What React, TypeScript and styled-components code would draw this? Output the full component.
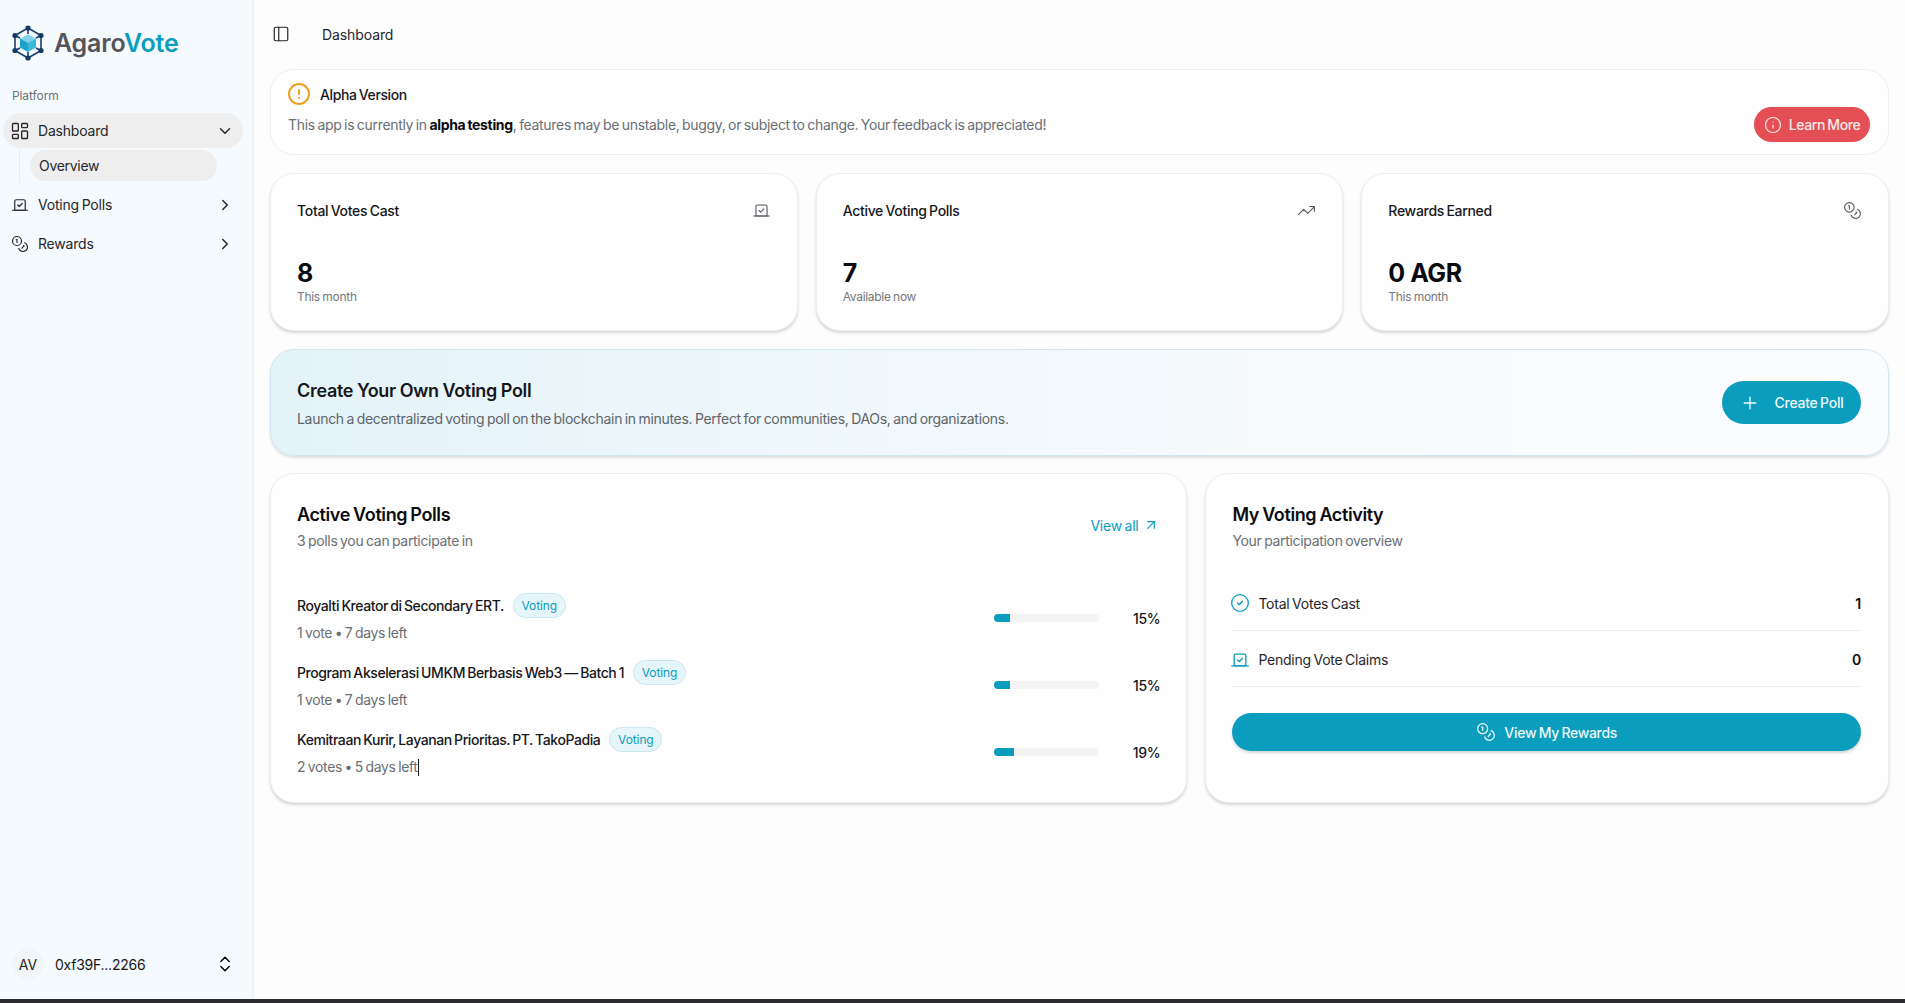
import React from "react";
import styled, { createGlobalStyle } from "styled-components";
import {
  ArrowUpRight,
  ChevronDown,
  ChevronRight,
  ChevronsUpDown,
  CircleAlert,
  CircleCheck,
  Coins,
  Info,
  LayoutDashboard,
  PanelLeft,
  Plus,
  TrendingUp,
  Vote,
} from "lucide-react";

const TEAL = "#0a9dbe";
const FONT = `Inter, "Liberation Sans", sans-serif`;

const GlobalStyle = createGlobalStyle`
  html, body {
    margin: 0;
    padding: 0;
    height: 100%;
    overflow: hidden;
    background: #fdfdfe;
  }
  * {
    box-sizing: border-box;
  }
  body {
    font-family: ${FONT};
    color: #0b0b0f;
  }
`;

const Page = styled.div`
  display: flex;
  flex-direction: column;
  height: 1003px;
`;

const Shell = styled.div`
  flex: 1;
  display: flex;
  min-height: 0;
`;

const BottomStrip = styled.div`
  height: 4px;
  background: #2b2b2d;
`;

const Sidebar = styled.aside`
  width: 254px;
  flex-shrink: 0;
  display: flex;
  flex-direction: column;
  background: #f5fafe;
  border-right: 2px solid #f0f1f3;
  padding: 22px 0 0;
`;

const Brand = styled.div`
  display: flex;
  align-items: center;
  gap: 10px;
  padding: 0 0 0 12px;
  height: 42px;
`;

const BrandName = styled.span`
  font-size: 25px;
  font-weight: 600;
  letter-spacing: -0.2px;
  color: #54545a;
`;

const BrandAccent = styled.span`
  color: ${TEAL};
`;

const GroupLabel = styled.div`
  font-size: 12px;
  line-height: 16px;
  letter-spacing: -0.1px;
  color: #6f7276;
  padding-left: 12px;
  margin-top: 24px;
  margin-bottom: 9px;
`;

const NavList = styled.nav`
  display: flex;
  flex-direction: column;
  padding: 0 9px 0 3px;
`;

const NavItem = styled.div<{ $active?: boolean; $gap?: number }>`
  display: flex;
  align-items: center;
  height: 35px;
  margin-top: ${(p) => p.$gap ?? 0}px;
  padding: 0 9px 0 8px;
  gap: 9px;
  border-radius: 18px;
  font-size: 14px;
  letter-spacing: -0.2px;
  word-spacing: -1px;
  color: #26262b;
  background: ${(p) => (p.$active ? "#eeeeee" : "transparent")};
`;

const NavText = styled.span`
  flex: 1;
`;

const DashboardIcon = styled(LayoutDashboard)`
  margin: 0 -1px;
`;

const SubList = styled.div`
  margin: 1px 0 0 16px;
  padding: 1px 0 1px 10px;
  border-left: 1px solid #e8ebee;
  height: 34px;
`;

const SubItem = styled.div`
  display: flex;
  align-items: center;
  width: 187px;
  height: 31px;
  padding-left: 9px;
  border-radius: 16px;
  background: #eeeeee;
  font-size: 14px;
  letter-spacing: -0.3px;
  color: #26262b;
`;

const SidebarFooter = styled.div`
  margin-top: auto;
  display: flex;
  align-items: center;
  height: 32px;
  margin-bottom: 19px;
  padding: 0 17px 0 12px;
  gap: 11px;
`;

const Avatar = styled.div`
  width: 32px;
  height: 32px;
  border-radius: 50%;
  background: #f3f6f8;
  display: flex;
  align-items: center;
  justify-content: center;
  font-size: 14px;
  color: #26262b;
`;

const Wallet = styled.span`
  flex: 1;
  font-size: 14px;
  letter-spacing: -0.25px;
  color: #17171b;
`;

const Main = styled.main`
  flex: 1;
  min-width: 0;
  display: flex;
  flex-direction: column;
  padding: 0 16px;
`;

const TopBar = styled.header`
  height: 69px;
  display: flex;
  align-items: center;
  gap: 32px;
  padding-left: 2px;
  padding-bottom: 1px;
  font-size: 14px;
  letter-spacing: -0.1px;
  color: #26262b;
`;

const Content = styled.div`
  display: flex;
  flex-direction: column;
  gap: 18px;
`;

const Card = styled.section`
  background: #fefefe;
  border: 1px solid #eceef2;
  border-radius: 24px;
  box-shadow: 0 2px 3px rgba(0, 0, 0, 0.16);
`;

const AlertCard = styled.section`
  height: 86px;
  background: #fefefe;
  border: 1px solid #eceef2;
  border-radius: 24px;
  padding: 12px 18px 12px 17px;
  display: flex;
  align-items: flex-end;
  justify-content: space-between;
`;

const AlertBody = styled.div`
  display: flex;
  flex-direction: column;
  gap: 9px;
  align-self: flex-start;
`;

const AlertHead = styled.div`
  display: flex;
  align-items: center;
  gap: 9px;
  height: 24px;
  font-size: 14px;
  font-weight: 500;
  letter-spacing: -0.4px;
  word-spacing: -1px;
  color: #17171b;
`;

const AlertIcon = styled(CircleAlert)`
  margin-left: -1px;
`;

const AlertText = styled.p`
  margin: 0;
  font-size: 14px;
  line-height: 20px;
  letter-spacing: -0.32px;
  word-spacing: -1px;
  color: #6b6e74;

  strong {
    font-weight: 700;
    color: #0b0b0f;
  }
`;

const LearnButton = styled.button`
  width: 116px;
  height: 35px;
  border: none;
  border-radius: 18px;
  background: #e34f55;
  color: #fbeaea;
  font-family: ${FONT};
  font-size: 14px;
  font-weight: 500;
  letter-spacing: -0.4px;
  word-spacing: -1px;
  display: flex;
  align-items: center;
  justify-content: center;
  gap: 7px;
`;

const StatRow = styled.div`
  display: grid;
  grid-template-columns: repeat(3, 1fr);
  gap: 18px;
`;

const StatCard = styled(Card)`
  height: 158px;
  padding: 24px 26px 0;
`;

const StatHead = styled.div`
  display: flex;
  align-items: center;
  justify-content: space-between;
  height: 24px;
  font-size: 14px;
  font-weight: 500;
  letter-spacing: -0.3px;
  word-spacing: -1px;
  color: #17171b;
`;

const StatValue = styled.div`
  margin-top: 35px;
  font-size: 25px;
  line-height: 32px;
  font-weight: 700;
  letter-spacing: -0.45px;
  color: #0b0b0f;
`;

const StatSub = styled.div`
  font-size: 12px;
  line-height: 15px;
  letter-spacing: -0.3px;
  word-spacing: -0.6px;
  color: #74777c;
`;

const Banner = styled.section`
  height: 107px;
  margin-bottom: -1px;
  border: 1px solid #cfe7ee;
  border-radius: 24px;
  background: linear-gradient(90deg, #e3f3f8 0%, #eef7fb 30%, #f8fbfe 70%, #fbfcfe 100%);
  box-shadow: 0 2px 3px rgba(0, 0, 0, 0.12);
  padding: 0 27px 0 26px;
  display: flex;
  align-items: center;
  justify-content: space-between;
`;

const BannerTitle = styled.h2`
  margin: 0 0 4px;
  font-size: 18px;
  line-height: 28px;
  font-weight: 600;
  letter-spacing: -0.3px;
  word-spacing: -0.5px;
  color: #17171b;
`;

const BannerText = styled.p`
  margin: 0;
  font-size: 14px;
  line-height: 20px;
  letter-spacing: -0.3px;
  word-spacing: -1px;
  color: #5f6369;
`;

const CreateButton = styled.button`
  width: 139px;
  height: 43px;
  border: none;
  border-radius: 22px;
  background: ${TEAL};
  color: #eef9fb;
  font-family: ${FONT};
  font-size: 14px;
  font-weight: 500;
  letter-spacing: -0.25px;
  word-spacing: -1px;
  display: flex;
  align-items: center;
  justify-content: center;
  gap: 15px;
`;

const BottomGrid = styled.div`
  display: grid;
  grid-template-columns: repeat(7, 1fr);
  gap: 18px;
`;

const PollsCard = styled(Card)`
  grid-column: span 4;
  height: 330px;
  padding: 27px 26px 0 26px;
`;

const ActivityCard = styled(Card)`
  grid-column: span 3;
  height: 330px;
  padding: 27px 27px 0 26px;
`;

const CardHead = styled.div`
  display: flex;
  align-items: center;
  justify-content: space-between;
`;

const CardTitle = styled.h2`
  margin: 0;
  font-size: 18px;
  line-height: 28px;
  font-weight: 600;
  letter-spacing: -0.38px;
  word-spacing: -1px;
  color: #0b0b0f;
`;

const CardSub = styled.p`
  margin: 0;
  font-size: 14px;
  line-height: 24px;
  letter-spacing: -0.32px;
  word-spacing: -1px;
  color: #6b6e74;
`;

const ViewAll = styled.a`
  display: flex;
  align-items: center;
  gap: 5px;
  margin: 0 1px 4px 0;
  font-size: 14px;
  letter-spacing: -0.25px;
  word-spacing: -1px;
  color: ${TEAL};
`;

const PollList = styled.div`
  margin-top: 40px;
  display: flex;
  flex-direction: column;
`;

const PollRow = styled.div`
  height: 67px;
  display: flex;
  align-items: flex-start;
  justify-content: space-between;
`;

const PollInfo = styled.div`
  display: flex;
  flex-direction: column;
`;

const PollTitleLine = styled.div`
  display: flex;
  align-items: center;
  gap: 9px;
  height: 25px;
`;

const PollTitle = styled.span`
  font-size: 14px;
  font-weight: 500;
  letter-spacing: -0.42px;
  word-spacing: -1px;
  color: #17171b;
`;

const Badge = styled.span`
  display: flex;
  align-items: center;
  justify-content: center;
  width: 53px;
  height: 25px;
  border: 1px solid #c9e7ef;
  border-radius: 13px;
  background: #e6f5f9;
  font-size: 12px;
  letter-spacing: -0.1px;
  color: ${TEAL};
`;

const PollMeta = styled.span`
  margin-top: 5px;
  display: flex;
  align-items: center;
  font-size: 14px;
  line-height: 20px;
  letter-spacing: -0.35px;
  word-spacing: -1px;
  color: #6b6e74;
`;

const TextCaret = styled.i`
  width: 1px;
  height: 17px;
  background: #17171b;
`;

const Progress = styled.div`
  display: flex;
  align-items: center;
  height: 50px;
`;

const Track = styled.div`
  width: 105px;
  height: 8px;
  border-radius: 4px;
  overflow: hidden;
  background: #f4f4f5;
`;

const Fill = styled.div`
  height: 100%;
  background: ${TEAL};
`;

const Percent = styled.span`
  width: 61px;
  text-align: right;
  font-size: 14px;
  font-weight: 500;
  letter-spacing: -0.3px;
  color: #17171b;
`;

const ActivityList = styled.div`
  margin-top: 21px;
  display: flex;
  flex-direction: column;
`;

const ActivityRow = styled.div<{ $height: number }>`
  height: ${(p) => p.$height}px;
  display: flex;
  align-items: center;
  gap: 8px;
  padding-top: 2px;
  border-bottom: 1px solid #e9ebf0;
  font-size: 14px;
  letter-spacing: -0.25px;
  word-spacing: -1px;
  color: #26262b;

  svg {
    margin-left: -2px;
  }
`;

const ActivityName = styled.span`
  flex: 1;
`;

const ActivityValue = styled.span`
  font-weight: 600;
  color: #0b0b0f;
`;

const RewardsButton = styled.button`
  margin-top: 26px;
  width: 100%;
  height: 38px;
  border: none;
  border-radius: 19px;
  background: ${TEAL};
  box-shadow: 0 2px 3px rgba(0, 0, 0, 0.16);
  color: #eef9fb;
  font-family: ${FONT};
  font-size: 14px;
  font-weight: 500;
  letter-spacing: -0.3px;
  word-spacing: -1px;
  display: flex;
  align-items: center;
  justify-content: center;
  gap: 8px;
`;

const Logo = () => (
  <svg width="32" height="36" viewBox="0 0 32 36" fill="none">
    <g stroke="#1b3f6b" strokeWidth="1.6">
      <path d="M16 3 L29 10.5 V25.5 L16 33 L3 25.5 V10.5 Z" />
      <path d="M16 3 V9 M29 10.5 L24 13 M29 25.5 L24 23 M16 33 V27 M3 25.5 L8 23 M3 10.5 L8 13" />
    </g>
    <path d="M16 9.5 L24 13.5 L16 17.8 L8 13.5 Z" fill="#7fd0e8" />
    <path d="M8 13.5 L16 17.8 V27 L8 22.6 Z" fill="#1ba3cb" />
    <path d="M24 13.5 L16 17.8 V27 L24 22.6 Z" fill="#3db7da" />
    <g fill="#163a66">
      <circle cx="16" cy="3" r="2.6" />
      <circle cx="29" cy="10.5" r="2.6" />
      <circle cx="29" cy="25.5" r="2.6" />
      <circle cx="16" cy="33" r="2.6" />
      <circle cx="3" cy="25.5" r="2.6" />
      <circle cx="3" cy="10.5" r="2.6" />
    </g>
  </svg>
);

const polls = [
  { title: "Royalti Kreator di Secondary ERT.", meta: "1 vote • 7 days left", pct: 15 },
  { title: "Program Akselerasi UMKM Berbasis Web3 — Batch 1", meta: "1 vote • 7 days left", pct: 15 },
  { title: "Kemitraan Kurir, Layanan Prioritas. PT. TakoPadia", meta: "2 votes • 5 days left", pct: 19, caret: true },
];

const stats = [
  { title: "Total Votes Cast", value: "8", sub: "This month", icon: <Vote size={19} strokeWidth={1.4} color="#55585e" /> },
  { title: "Active Voting Polls", value: "7", sub: "Available now", icon: <TrendingUp size={19} strokeWidth={1.4} color="#55585e" /> },
  { title: "Rewards Earned", value: "0 AGR", sub: "This month", icon: <Coins size={19} strokeWidth={1.4} color="#55585e" /> },
];

export default function App() {
  return (
    <Page>
      <GlobalStyle />
      <Shell>
        <Sidebar>
          <Brand>
            <Logo />
            <BrandName>
              Agaro<BrandAccent>Vote</BrandAccent>
            </BrandName>
          </Brand>
          <GroupLabel>Platform</GroupLabel>
          <NavList>
            <NavItem $active>
              <DashboardIcon size={20} strokeWidth={1.6} />
              <NavText>Dashboard</NavText>
              <ChevronDown size={18} strokeWidth={2} />
            </NavItem>
            <SubList>
              <SubItem>Overview</SubItem>
            </SubList>
            <NavItem $gap={4}>
              <Vote size={18} strokeWidth={1.6} />
              <NavText>Voting Polls</NavText>
              <ChevronRight size={18} strokeWidth={2} />
            </NavItem>
            <NavItem $gap={4}>
              <Coins size={18} strokeWidth={1.6} />
              <NavText>Rewards</NavText>
              <ChevronRight size={18} strokeWidth={2} />
            </NavItem>
          </NavList>
          <SidebarFooter>
            <Avatar>AV</Avatar>
            <Wallet>0xf39F...2266</Wallet>
            <ChevronsUpDown size={20} strokeWidth={1.8} />
          </SidebarFooter>
        </Sidebar>
        <Main>
          <TopBar>
            <PanelLeft size={18} strokeWidth={1.6} />
            <span>Dashboard</span>
          </TopBar>
          <Content>
            <AlertCard>
              <AlertBody>
                <AlertHead>
                  <AlertIcon size={24} strokeWidth={2} color="#f0a020" />
                  Alpha Version
                </AlertHead>
                <AlertText>
                  This app is currently in <strong>alpha testing</strong>, features may be unstable, buggy, or subject
                  to change. Your feedback is appreciated!
                </AlertText>
              </AlertBody>
              <LearnButton>
                <Info size={18} strokeWidth={1.6} />
                Learn More
              </LearnButton>
            </AlertCard>
            <StatRow>
              {stats.map((s) => (
                <StatCard key={s.title}>
                  <StatHead>
                    {s.title}
                    {s.icon}
                  </StatHead>
                  <StatValue>{s.value}</StatValue>
                  <StatSub>{s.sub}</StatSub>
                </StatCard>
              ))}
            </StatRow>
            <Banner>
              <div>
                <BannerTitle>Create Your Own Voting Poll</BannerTitle>
                <BannerText>
                  Launch a decentralized voting poll on the blockchain in minutes. Perfect for communities, DAOs, and
                  organizations.
                </BannerText>
              </div>
              <CreateButton>
                <Plus size={20} strokeWidth={1.6} />
                Create Poll
              </CreateButton>
            </Banner>
            <BottomGrid>
              <PollsCard>
                <CardHead>
                  <div>
                    <CardTitle>Active Voting Polls</CardTitle>
                    <CardSub>3 polls you can participate in</CardSub>
                  </div>
                  <ViewAll>
                    View all
                    <ArrowUpRight size={16} strokeWidth={1.8} />
                  </ViewAll>
                </CardHead>
                <PollList>
                  {polls.map((p) => (
                    <PollRow key={p.title}>
                      <PollInfo>
                        <PollTitleLine>
                          <PollTitle>{p.title}</PollTitle>
                          <Badge>Voting</Badge>
                        </PollTitleLine>
                        <PollMeta>
                          {p.meta}
                          {p.caret && <TextCaret />}
                        </PollMeta>
                      </PollInfo>
                      <Progress>
                        <Track>
                          <Fill style={{ width: `${p.pct}%` }} />
                        </Track>
                        <Percent>{p.pct}%</Percent>
                      </Progress>
                    </PollRow>
                  ))}
                </PollList>
              </PollsCard>
              <ActivityCard>
                <CardTitle>My Voting Activity</CardTitle>
                <CardSub>Your participation overview</CardSub>
                <ActivityList>
                  <ActivityRow $height={57}>
                    <CircleCheck size={20} strokeWidth={1.6} color={TEAL} />
                    <ActivityName>Total Votes Cast</ActivityName>
                    <ActivityValue>1</ActivityValue>
                  </ActivityRow>
                  <ActivityRow $height={56}>
                    <Vote size={20} strokeWidth={1.6} color={TEAL} />
                    <ActivityName>Pending Vote Claims</ActivityName>
                    <ActivityValue>0</ActivityValue>
                  </ActivityRow>
                </ActivityList>
                <RewardsButton>
                  <Coins size={20} strokeWidth={1.5} />
                  View My Rewards
                </RewardsButton>
              </ActivityCard>
            </BottomGrid>
          </Content>
        </Main>
      </Shell>
      <BottomStrip />
    </Page>
  );
}
